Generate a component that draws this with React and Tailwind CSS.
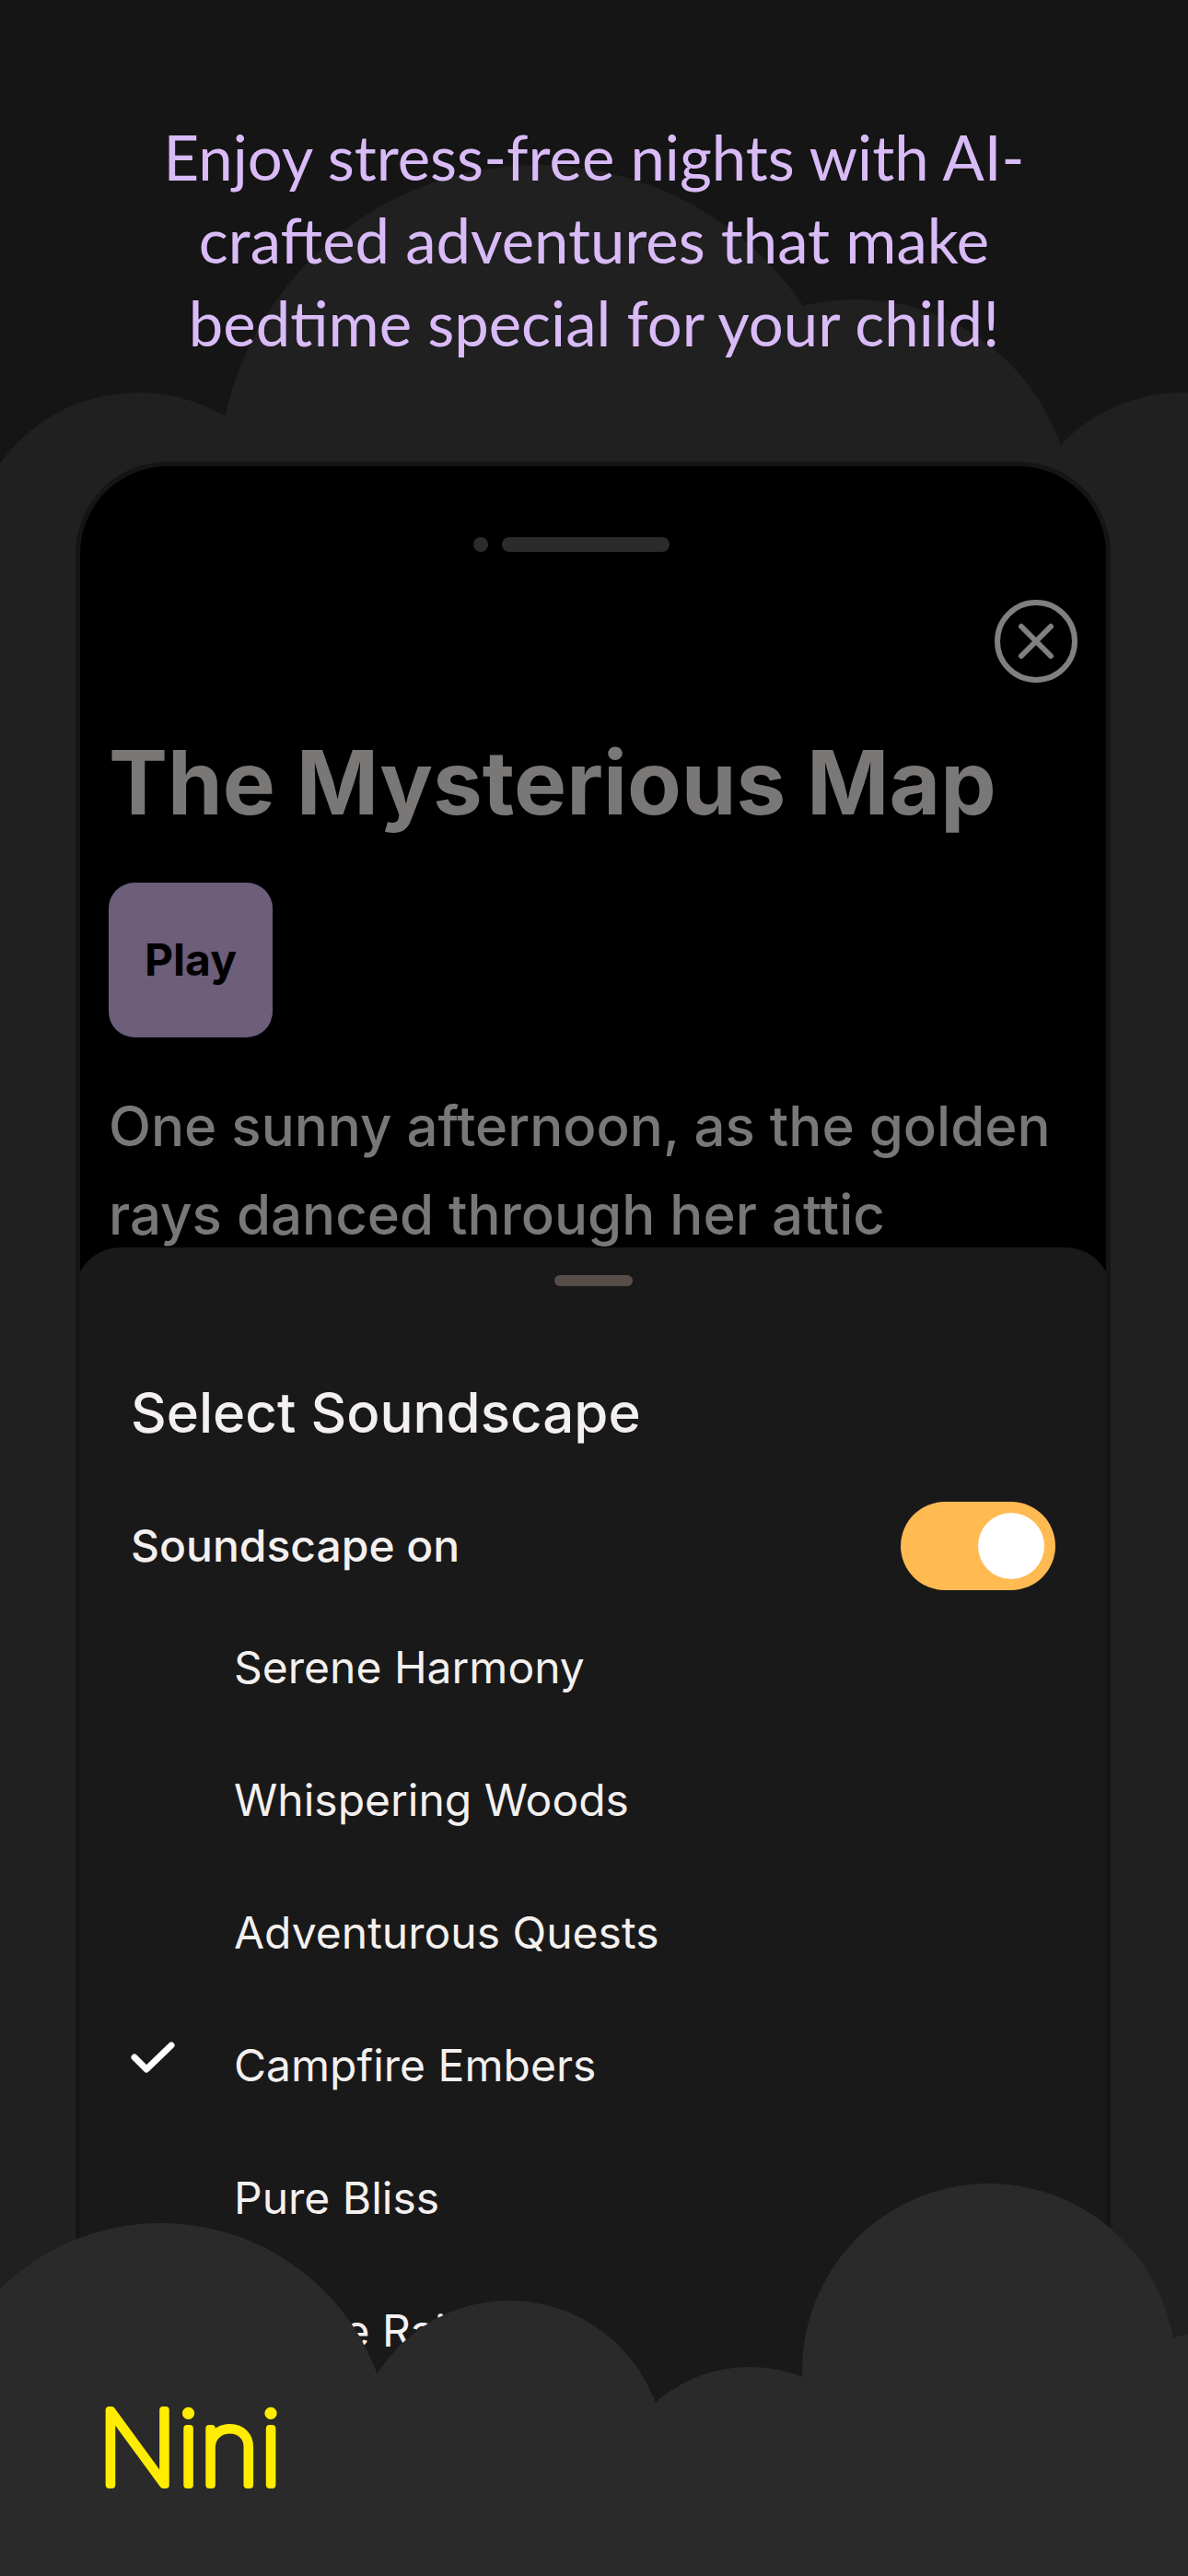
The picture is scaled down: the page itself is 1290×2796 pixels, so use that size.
import { useState } from "react";

const soundscapes = [
  "Serene Harmony",
  "Whispering Woods",
  "Adventurous Quests",
  "Campfire Embers",
  "Pure Bliss",
  "Gentle Rain",
];

function BackClouds() {
  return (
    <div className="absolute inset-0 flex flex-col" aria-hidden="true">
      <svg viewBox="0 0 1290 700" className="block w-full shrink-0 fill-[#202020]">
        <circle cx="150" cy="611" r="185" />
        <circle cx="584" cy="527" r="348" />
        <circle cx="929" cy="561" r="236" />
        <circle cx="1285" cy="611" r="185" />
        <rect y="600" width="1290" height="100" />
      </svg>
      <div className="grow bg-[#202020]" />
    </div>
  );
}

function FrontClouds() {
  return (
    <svg
      viewBox="0 0 1290 240"
      className="block w-full fill-[#2a2a2a]"
      aria-hidden="true"
    >
      <circle cx="175" cy="293" r="250" />
      <circle cx="553" cy="296" r="169" />
      <circle cx="814" cy="354" r="155" />
      <circle cx="1074" cy="203" r="203" />
      <circle cx="1325" cy="314" r="155" />
    </svg>
  );
}

function Story() {
  return (
    <div className="px-[31px] text-[#7a7777]">
      <div className="mt-[52px] flex justify-end">
        <button type="button" aria-label="Close" className="size-[90px]">
          <svg
            viewBox="0 0 90 90"
            className="size-full fill-none stroke-[#808080]"
            strokeWidth="6"
            strokeLinecap="round"
          >
            <circle cx="45" cy="45" r="42" />
            <path d="M29 29 61 61M61 29 29 61" />
          </svg>
        </button>
      </div>
      <h1 className="mt-12 text-[96px] leading-[120px] font-bold">
        The Mysterious Map
      </h1>
      <button
        type="button"
        className="mt-[49px] block h-[168px] w-[178px] rounded-[28px] bg-[#6d5e7a] text-5xl font-bold text-black"
      >
        Play
      </button>
      <p className="mt-12 text-6xl leading-[96px] font-medium">
        One sunny afternoon, as the golden rays danced through her attic
      </p>
    </div>
  );
}

function SoundscapeSheet() {
  const [enabled, setEnabled] = useState(true);
  const [selected, setSelected] = useState("Campfire Embers");

  return (
    <section className="relative -mx-[6px] -mt-3 rounded-t-[50px] bg-[#191919] px-[61px] pt-[30px] pb-8 text-[#f3f0ef]">
      <div className="mx-auto h-3 w-[85px] rounded-full bg-[#564c48]" />
      <h2 className="mt-[101px] text-6xl leading-[72px] font-medium">
        Select Soundscape
      </h2>
      <div className="mt-[61px] flex h-24 items-center justify-between">
        <label htmlFor="soundscape-on" className="text-5xl font-medium">
          Soundscape on
        </label>
        <input
          id="soundscape-on"
          type="checkbox"
          role="switch"
          checked={enabled}
          onChange={(e) => setEnabled(e.target.checked)}
          className="flex h-24 w-[168px] appearance-none items-center rounded-full bg-[#564c48] p-3 before:size-[72px] before:rounded-full before:bg-white checked:justify-end checked:bg-[#ffba52]"
        />
      </div>
      <div className="mt-3" role="radiogroup" aria-label="Soundscape">
        {soundscapes.map((name) => (
          <label key={name} className="flex h-36 items-center gap-16 text-5xl">
            <input
              type="radio"
              name="soundscape"
              value={name}
              checked={selected === name}
              onChange={() => setSelected(name)}
              className="peer sr-only"
            />
            <svg
              viewBox="0 0 48 60"
              className="invisible h-[60px] w-12 fill-none stroke-white peer-checked:visible"
              strokeWidth="7"
              strokeLinecap="round"
              strokeLinejoin="round"
              aria-hidden="true"
            >
              <path d="M4 21 17 34 44 8" />
            </svg>
            {name}
          </label>
        ))}
      </div>
    </section>
  );
}

export default function App() {
  return (
    <div className="relative overflow-hidden bg-[#151515] font-['Inter',sans-serif]">
      <BackClouds />
      <header className="relative px-40 pt-[125px]">
        <p className="text-center font-['Lato',sans-serif] text-[67px] leading-[90px] text-[#d9bbf7]">
          Enjoy stress-free nights with AI-crafted adventures that make bedtime
          special for your child!
        </p>
      </header>
      <main className="relative mr-[84px] ml-[82px] mt-[106px] overflow-hidden rounded-t-[100px] border-5 border-b-0 border-[#151515] bg-black pt-[77px]">
        <div className="flex justify-center gap-[15px] pr-12">
          <span className="size-4 rounded-full bg-[#2b2b2b]" />
          <span className="h-4 w-[182px] rounded-full bg-[#2b2b2b]" />
        </div>
        <Story />
        <SoundscapeSheet />
      </main>
      <footer className="relative -mt-[264px]">
        <FrontClouds />
        <div className="flow-root h-[186px] bg-[#2a2a2a] px-[106px]">
          <svg
            viewBox="0 0 240 160"
            className="-mt-8 h-[160px] w-[240px] fill-[#ffec00] stroke-[#ffec00]"
            strokeWidth="8"
            strokeLinejoin="round"
            role="img"
            aria-label="Nini"
          >
            <text x="0" y="119" className="text-[112px] font-thin">
              Nini
            </text>
          </svg>
        </div>
      </footer>
    </div>
  );
}
